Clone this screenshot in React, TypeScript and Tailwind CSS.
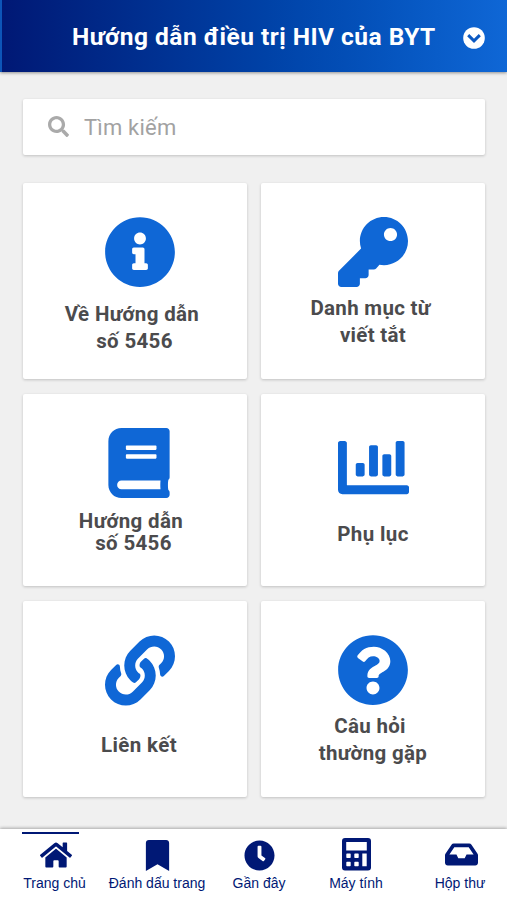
import type { ReactNode } from "react";
import {
  FaBook,
  FaBookmark,
  FaChartBar,
  FaClock,
  FaHome,
  FaInbox,
  FaInfoCircle,
  FaKey,
  FaLink,
  FaQuestionCircle,
  FaSearch,
} from "react-icons/fa";

type CardProps = { icon: ReactNode; lines: string[]; label: string; shifts?: string[] };

function Card({ icon, lines, label, shifts = [] }: CardProps) {
  return (
    <button className="flex flex-col items-center rounded-[2px] bg-white pt-[34px] text-[#0f67d6] shadow-[0_1px_3px_rgba(0,0,0,0.2)]">
      <span className="flex h-[71px] w-[80px] items-center justify-center">{icon}</span>
      <span className={"flex flex-col items-center whitespace-nowrap text-[20.5px] font-bold text-[#4b4b4d] " + label}>
        {lines.map((line, i) => (
          <span key={line} className={shifts[i]}>{line}</span>
        ))}
      </span>
    </button>
  );
}

function CalculatorIcon() {
  return (
    <svg viewBox="0 0 29 33" className="mb-[1px] h-[33px] w-[29px]" fill="currentColor" fillRule="evenodd">
      <path d="M3 0H26Q29 0 29 3V29.5Q29 32.5 26 32.5H3Q0 32.5 0 29.5V3Q0 0 3 0ZM4.2 4V12.4H24.8V4ZM5 15.5Q4.3 15.5 4.3 16.2V19.2Q4.3 19.9 5 19.9H8Q8.7 19.9 8.7 19.2V16.2Q8.7 15.5 8 15.5ZM13 15.5Q12.3 15.5 12.3 16.2V19.2Q12.3 19.9 13 19.9H16Q16.7 19.9 16.7 19.2V16.2Q16.7 15.5 16 15.5ZM20.3 15.5V28.2H24.7V15.5ZM5 23.8Q4.3 23.8 4.3 24.5V27.5Q4.3 28.2 5 28.2H8Q8.7 28.2 8.7 27.5V24.5Q8.7 23.8 8 23.8ZM13 23.8Q12.3 23.8 12.3 24.5V27.5Q12.3 28.2 13 28.2H16Q16.7 28.2 16.7 27.5V24.5Q16.7 23.8 16 23.8Z" />
    </svg>
  );
}

function NavItem({ icon, text, className }: { icon: ReactNode; text: string; className: string }) {
  return (
    <button className={"flex flex-col items-center whitespace-nowrap " + className}>
      <span className="flex h-[36px] items-center">{icon}</span>
      <span className="mt-[1px] text-[14px] leading-[18px]">{text}</span>
    </button>
  );
}

export default function App() {
  return (
    <div className="flex h-[900px] w-[507px] flex-col bg-[#f0f0f0] font-['Roboto',sans-serif]">
      <header className="flex h-[72px] shrink-0 items-center border-l-2 border-[#0d55b8] bg-linear-to-r from-[#001875] to-[#0f67d6] pl-[70px] pt-[3px] text-white shadow-[0_1px_3px_rgba(0,0,0,0.4)]">
        <h1 className="w-[391px] whitespace-nowrap text-[24.5px] font-bold tracking-[0.47px]">Hướng dẫn điều trị HIV của BYT</h1>
        <svg viewBox="0 0 22 22" className="size-[22px]">
          <circle cx="11" cy="11" r="10.8" fill="white" />
          <path d="M5.2 8.2 11 13.8 16.8 8.2" fill="none" stroke="#0c59c2" strokeWidth="3" />
        </svg>
      </header>

      <main className="flex grow flex-col px-[23px] pt-[27px]">
        <div className="flex h-[56px] w-[462px] items-center rounded-[2px] bg-white pl-[25px] text-[#aaa] shadow-[0_1px_3px_rgba(0,0,0,0.2)]">
          <FaSearch className="mb-[2px] size-[21px]" />
          <span className="ml-[15px] text-[22px] tracking-[0.2px] text-[#a2a2a2]">Tìm kiếm</span>
        </div>
        <div className="mt-[28px] grid w-[462px] grid-cols-[224px_224px] grid-rows-[196px_192.5px_196px] gap-x-[14px] gap-y-[14.5px]">
          <Card icon={<FaInfoCircle className="mb-[2px] ml-[10px] size-[72px] shrink-0" />} lines={["Về Hướng dẫn", "số 5456"]} label="mt-[13px] leading-[27px] tracking-[0.35px] mr-[6px]" shifts={["", "ml-[5px]"]} />
          <Card icon={<FaKey className="mb-[1px] size-[70px]" />} lines={["Danh mục từ", "viết tắt"]} label="mt-[7px] leading-[27px] tracking-[0.3px] mr-[5px]" shifts={["", "ml-[5px]"]} />
          <Card icon={<FaBook className="mb-[1px] ml-[8px] size-[70px]" />} lines={["Hướng dẫn", "số 5456"]} label="mt-[11px] leading-[22px] tracking-[0.35px] mr-[8px]" shifts={["", "ml-[5px]"]} />
          <Card icon={<FaChartBar className="mt-[9px] size-[71px]" />} lines={["Phụ lục"]} label="mt-[22px] leading-[27px] tracking-[0.4px]" />
          <Card icon={<FaLink className="ml-[10px] size-[71px]" />} lines={["Liên kết"]} label="mt-[26px] leading-[27px] tracking-[0.4px] ml-[8px]" />
          <Card icon={<FaQuestionCircle className="size-[72px] shrink-0" />} lines={["Câu hỏi", "thường gặp"]} label="mt-[7px] leading-[27px] tracking-[0.3px]" shifts={["mr-[6px]", ""]} />
        </div>
      </main>

      <nav className="flex h-[71px] shrink-0 bg-white font-['Liberation_Sans',sans-serif] text-[#001875] shadow-[0_-1px_3px_rgba(0,0,0,0.3)]">
        <div className="ml-[22px] flex w-[65px] flex-col">
          <span className="mt-[3px] h-[2px] w-[57px] bg-[#001875]" />
          <NavItem icon={<FaHome className="ml-[3px] size-[32px]" />} text="Trang chủ" className="mt-[3px]" />
        </div>
        <NavItem icon={<FaBookmark className="size-[31px]" />} text="Đánh dấu trang" className="ml-[20px] mt-[8px] w-[100px]" />
        <NavItem icon={<FaClock className="size-[31px]" />} text="Gần đây" className="ml-[22px] mt-[8px] w-[60px]" />
        <NavItem icon={<CalculatorIcon />} text="Máy tính" className="ml-[36px] mt-[8px] w-[62px]" />
        <NavItem icon={<FaInbox className="ml-[2px] mb-[1px] size-[33px]" />} text="Hộp thư" className="ml-[43px] mt-[8px] w-[60px]" />
      </nav>
    </div>
  );
}
